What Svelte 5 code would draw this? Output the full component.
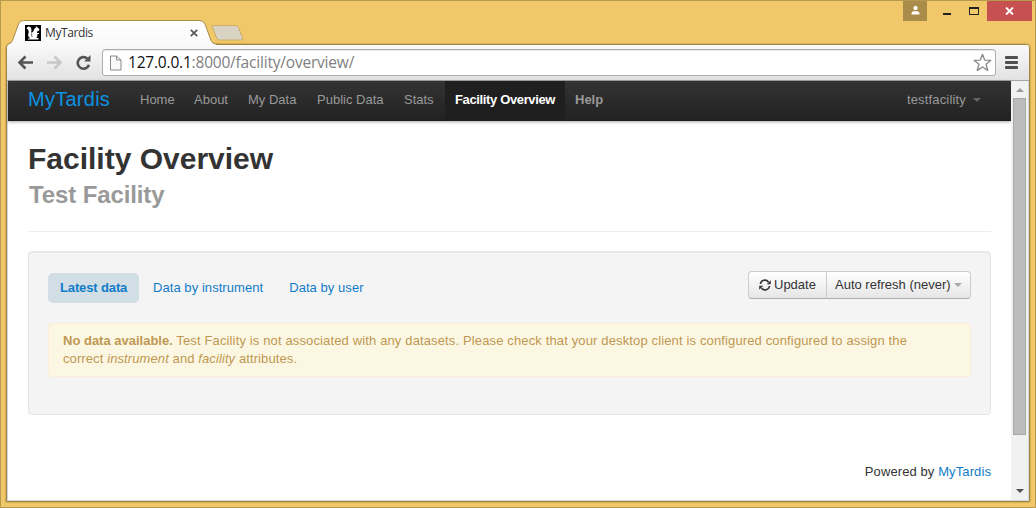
<script>
  const links = [
    { label: 'Home', width: 54 },
    { label: 'About', width: 54 },
    { label: 'My Data', width: 69 },
    { label: 'Public Data', width: 87 },
    { label: 'Stats', width: 51 },
    { label: 'Facility Overview', width: 120, active: true },
    { label: 'Help', width: 48, bold: true }
  ];
  const pills = ['Latest data', 'Data by instrument', 'Data by user'];
</script>

<div class="window">
  <header class="titlebar">
    <div class="tabs">
      <svg class="tabshape" width="244" height="25" viewBox="0 0 244 25">
        <defs>
          <linearGradient id="tabfill" x1="0" y1="0" x2="0" y2="1">
            <stop offset="0" stop-color="#fff" />
            <stop offset="1" stop-color="#f9f9f9" />
          </linearGradient>
        </defs>
        <path d="M205.500 5.500q-2-.5-1 1.500l4 11q1 2 3 2h21q3 0 2-2l-4-10.500q-1-2-3.500-2z" fill="#d8d3c3" stroke="#c9ad68" />
        <path d="M0 25v-1q3 0 4.500-3.500L10.500 4q1.500-3.500 5-3.500h176q4 0 5.500 3.500l6 16.500q1.500 3.500 5 3.500v1z" fill="url(#tabfill)" />
        <path d="M0 24q3 0 4.500-3.500L10.500 4q1.500-3.500 5-3.500h176q4 0 5.500 3.500l6 16.500q1.500 3.500 5 3.500h4" fill="none" stroke="#a98c48" />
      </svg>
      <div class="tab">
        <svg class="favicon" width="16" height="16" viewBox="0 0 16 16">
          <rect width="16" height="16" fill="#000" />
          <path d="M1.500 3.500Q2 1.500 4 1.500Q6.500 2 6.500 4.500Q6 6.500 6.500 8Q8.500 6.500 9 5Q9 3 11 2.500L11.500 1L12.500 2.500Q14.500 3.500 14.500 5Q14 6 12.500 6L12 8H14V9H12.500Q12.500 11.500 11.500 13H13.500V14.500H3V13.500H5.500Q3 12 3 9.500Q4 7.500 3.500 5.500Q3 4 1.500 3.500Z" fill="#fff" />
          <path d="M6.500 8.500L7 12" stroke="#000" stroke-width=".6" />
        </svg>
        <span class="tabname">MyTardis</span>
        <svg class="tabclose" width="8" height="8" viewBox="0 0 8 8"><path d="M.8.8l6.400 6.400M7.200.8L.8 7.200" stroke="#555" stroke-width="1.700" /></svg>
      </div>
    </div>
    <div class="controls">
      <div class="user">
        <svg width="9" height="9" viewBox="0 0 9 9" fill="#fff"><rect x="2.500" y="0" width="4" height="4" rx="1.500" /><path d="M.5 8.500V7l1.500-1.800h5L8.500 7v1.500z" /></svg>
      </div>
      <svg class="min" width="9" height="9" viewBox="0 0 9 9"><path d="M0 6h8v2H0z" fill="#222" /></svg>
      <svg class="max" width="10" height="8" viewBox="0 0 10 8"><path d="M0 0h10v8H0zM1 2v5h8V2z" fill="#222" fill-rule="evenodd" /></svg>
      <div class="close">
        <svg width="9" height="8" viewBox="0 0 9 8"><path d="M1 .5l7 7M8 .5l-7 7" stroke="#fff" stroke-width="1.900" /></svg>
      </div>
    </div>
  </header>

  <section class="browser">
    <div class="toolbar">
      <svg class="navicons" width="84" height="20" viewBox="0 0 84 20" fill="none">
        <path d="M16 9.500H3M8.500 3.500L2.500 9.500l6 6" stroke="#555" stroke-width="2.600" />
        <path d="M30 9.500h13M37.500 3.500l6 6-6 6" stroke="#c8c8c8" stroke-width="2.600" />
        <path d="M72 11.800A5.800 5.800 0 1 1 70.300 5.500" stroke="#555" stroke-width="2.600" />
        <path d="M73.500 2v6.500H67z" fill="#555" />
      </svg>
      <div class="address">
        <svg width="12" height="16" viewBox="0 0 12 16"><path d="M.5 1h6l4.500 4v10H.5zM6.500 1v4h4.500" fill="#fafafa" stroke="#888" /></svg>
        <span class="url"><b>127.0.0.1</b>:8000/facility/overview/</span>
        <svg class="star" width="20" height="19" viewBox="0 0 20 19"><path d="M10.500 1.300l2.200 5.800 6.200.2-4.900 3.900 1.800 6.200L10.500 14l-5.300 3.400 1.800-6.200L2.100 7.300l6.200-.2z" fill="#fff" stroke="#888" stroke-width="1.300" stroke-linejoin="round" /></svg>
      </div>
      <svg class="menu" width="13" height="13" viewBox="0 0 13 13" fill="#505050"><rect width="13" height="3" rx="1" /><rect y="5" width="13" height="3" rx="1" /><rect y="10" width="13" height="3" rx="1" /></svg>
    </div>

    <div class="viewport">
      <div class="page">
        <nav>
          <a class="brand" href="#home">MyTardis</a>
          <div class="links">
            {#each links as link}
              <a href="#nav" class:active={link.active} class:bold={link.bold} style="width: {link.width}px">{link.label}</a>
            {/each}
          </div>
          <a class="account" href="#account">testfacility <i class="caret"></i></a>
        </nav>

        <main>
          <div class="heading">
            <h1>Facility Overview</h1>
            <h2>Test Facility</h2>
          </div>
          <div class="well">
            <div class="actions">
              <div class="pills">
                {#each pills as pill, i}
                  <a href="#pill" class:active={i === 0}>{pill}</a>
                {/each}
              </div>
              <div class="group">
                <button class="update">
                  <svg width="12" height="12" viewBox="0 0 12 12" fill="none" stroke="#333" stroke-width="1.600">
                    <path d="M1.400 5A4.500 4.500 0 0 1 9.500 3M10.600 7A4.500 4.500 0 0 1 2.500 9" />
                    <path d="M11.800 1.200v4H7.700zM.2 10.800v-4h4.100z" fill="#333" stroke="none" />
                  </svg>
                  <span>Update</span>
                </button>
                <button class="auto"><span>Auto refresh (never)</span><i class="caret"></i></button>
              </div>
            </div>
            <div class="alert">
              <strong>No data available.</strong> Test Facility is not associated with any datasets. Please check that your desktop client is configured configured to assign the<br /><span class="second">correct <em>instrument</em> and <em>facility</em> attributes.</span>
            </div>
          </div>
          <footer>Powered by <a href="#mytardis">MyTardis</a></footer>
        </main>
      </div>
      <div class="scrollbar">
        <i class="up"></i>
        <div class="thumb"></div>
        <i class="down"></i>
      </div>
    </div>
  </section>
</div>

<style>
  :global(body) { margin: 0; overflow: hidden; }
  * { box-sizing: border-box; }
  a { text-decoration: none; color: #0f7cc8; }
  svg { display: block; flex: none; }
  .window {
    width: 1036px; height: 508px; border: 1px solid #b6984f; background: #f0c869;
    display: flex; flex-direction: column;
    font: 13px/18px "Liberation Sans", Arial, sans-serif; color: #333;
  }
  .titlebar { height: 43px; flex: none; display: flex; justify-content: space-between; }
  .tabs { display: grid; padding: 19px 0 0 7px; align-items: start; }
  .tabshape { grid-area: 1 / 1; position: relative; z-index: 1; }
  .tab { grid-area: 1 / 1; position: relative; z-index: 2; height: 25px; display: flex; align-items: center; padding-left: 17px; width: 200px; }
  .tabname { font: 12px/16px "Open Sans", "Noto Sans", sans-serif; letter-spacing: -.4px; margin: 0 0 0 4px; flex: 1; }
  .tabclose { margin-right: 10px; }
  .controls { display: flex; height: 20px; }
  .user { width: 24px; height: 20px; background: #a98c49; display: flex; justify-content: center; padding-top: 5px; margin-right: 16px; }
  .min { margin-top: 6px; margin-right: 17px; }
  .max { margin-top: 6px; margin-right: 8px; }
  .close { width: 45px; height: 20px; background: #c75050; display: flex; justify-content: center; padding-top: 6px; margin-right: 3px; }

  .browser {
    margin: 0 5px 0; height: 458px; flex: none; display: flex; flex-direction: column;
    border: 1px solid #a08443; border-radius: 4px 4px 1px 1px; background: #fff;
    box-shadow: 0 0 1px 1px rgba(130, 100, 30, .25);
  }
  .toolbar {
    height: 36px; flex: none; display: flex; align-items: center; border-bottom: 1px solid #a5a5a5;
    background: linear-gradient(#f9f9f9, #e2e2e2); padding: 0 11px 0 10px; border-radius: 3px 3px 0 0;
  }
  .navicons { margin-right: 1px; }
  .address {
    width: 894px; height: 27px; border: 1px solid #adadad; border-radius: 3px; background: #fff;
    box-shadow: inset 0 1px 0 #e6e6e6; display: flex; align-items: center; padding: 0 3px 0 7px;
  }
  .url { font: 15.5px/24px "Open Sans", "Noto Sans", sans-serif; color: #808080; margin: -2px 0 0 6px; flex: 1; letter-spacing: -.2px; }
  .url b { font-weight: 400; color: #111; }
  .menu { margin-left: 9px; }

  .viewport { flex: 1; display: flex; border: solid #d3d6de; border-width: 0 1px 1px; }
  .page { flex: 1; min-width: 0; }
  nav {
    height: 40px; background: linear-gradient(#333, #222); border-bottom: 1px solid #1c1c1c;
    display: flex; align-items: center; padding: 0 30px 0 20px; box-shadow: 0 1px 3px rgba(0, 0, 0, .35);
  }
  nav a { color: #999; }
  nav .brand { font-size: 20px; color: #0c94e4; width: 102px; line-height: 36px; padding-bottom: 3px; letter-spacing: .26px; }
  .links { display: flex; height: 40px; flex: 1; }
  .links a { padding-left: 10px; line-height: 38px; white-space: nowrap; }
  .links .active { background: #1f1f1f; color: #fff; font-weight: bold; letter-spacing: -.36px; }
  .links .bold { font-weight: bold; }
  .account { display: flex; align-items: center; gap: 7px; line-height: 38px; padding-bottom: 2px; letter-spacing: .17px; }
  .caret { width: 0; height: 0; border: solid transparent; border-width: 4px 4px 0; border-top-color: #666; }
  main { padding: 20px 20px 0; }
  .heading { height: 91px; border-bottom: 1px solid #eee; }
  h1 { margin: 0; font-size: 30px; line-height: 36px; }
  h2 { margin: 0 0 0 1px; font-size: 24px; line-height: 36px; color: #999; letter-spacing: -.12px; }
  .well {
    margin-top: 19px; height: 164px; padding: 19px; background: #f4f4f4; border: 1px solid #e5e5e5;
    border-radius: 4px; box-shadow: inset 0 1px 1px rgba(0, 0, 0, .05);
  }
  .actions { display: flex; justify-content: space-between; height: 52px; }
  .pills { display: flex; gap: 2px; padding-top: 2px; }
  .pills a { height: 30px; padding: 0 12px; line-height: 29px; border-radius: 5px; white-space: nowrap; letter-spacing: .06px; }
  .pills .active { background: #d1dee6; font-weight: bold; width: 91px; letter-spacing: -.13px; }
  .group { display: flex; height: 28px; }
  button {
    font: inherit; color: #333; height: 28px; display: flex; align-items: center; padding: 0 8px 1px;
    border: 1px solid #ccc; border-bottom-color: #aaa; background: linear-gradient(#fff, #e6e6e6); white-space: nowrap;
  }
  .update { width: 79px; border-radius: 4px 0 0 4px; gap: 3px; padding-left: 10px; }
  .auto { width: 145px; margin-left: -1px; border-radius: 0 4px 4px 0; gap: 3px; }
  .auto .caret { border-top-color: #aaa; }
  .alert {
    height: 54px; padding: 8px 14px; background: #fcf7e2; border: 1px solid #fbeed5; border-radius: 4px;
    color: #c09853; white-space: nowrap; letter-spacing: .138px;
  }
  .alert strong { letter-spacing: 0; }
  .second { letter-spacing: .1px; }
  footer { text-align: right; margin-top: 48px; letter-spacing: .1px; }
  .scrollbar { width: 17px; background: #f1f1f1; display: flex; flex-direction: column; align-items: center; }
  .up { margin-top: 7px; border: solid transparent; border-width: 0 4px 4px; border-bottom-color: #999; }
  .thumb { margin-top: 6px; width: 13px; height: 337px; background: #bcbcbc; border: 1px solid #a8a8a8; }
  .down { margin-top: auto; margin-bottom: 7px; border: solid transparent; border-width: 4px 4px 0; border-top-color: #505050; }
</style>
